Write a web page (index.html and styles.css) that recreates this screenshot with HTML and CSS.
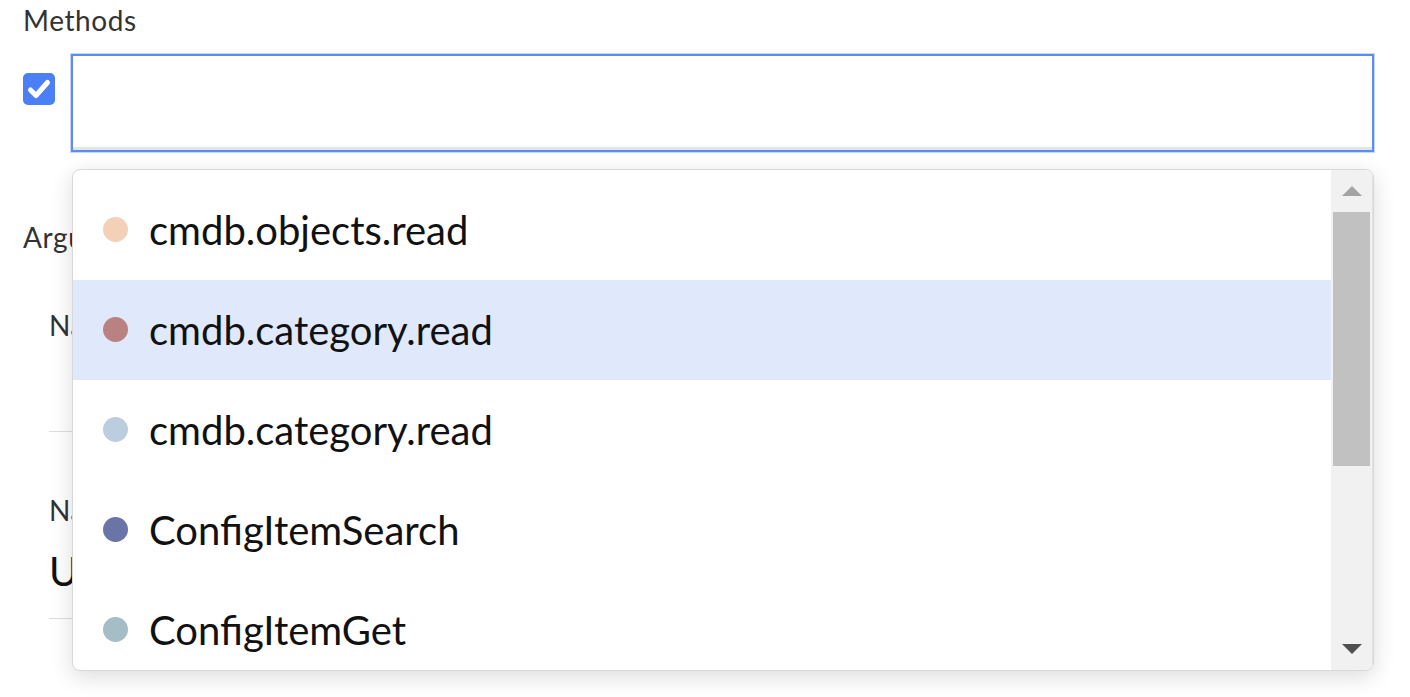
FILE: index.html
```html
<!DOCTYPE html>
<html lang="en">
<head>
<meta charset="utf-8">
<title>Methods</title>
<link rel="stylesheet" href="styles.css">
</head>
<body>
<div class="page">
  <div class="field">
    <div class="label">Methods</div>
    <div class="method-row">
      <span class="checkbox">
        <svg viewBox="0 0 32 32" width="32" height="32"><path d="M7.5 17 L13 22.5 L24.5 9.5" fill="none" stroke="#fff" stroke-width="5" stroke-linecap="round" stroke-linejoin="round"/></svg>
      </span>
      <div class="input"></div>
    </div>
  </div>

  <div class="section">
    <div class="label">Arguments</div>
    <div class="arg first">
      <div class="arg-label">Name</div>
      <div class="arg-value"></div>
    </div>
    <div class="arg">
      <div class="arg-label">Name</div>
      <div class="arg-value">UserName</div>
    </div>
  </div>

  <div class="dropdown">
    <ul class="options">
      <li class="option"><span class="dot" style="background:#f3d0b8"></span>cmdb.objects.read</li>
      <li class="option active"><span class="dot" style="background:#b98180"></span>cmdb.category.read</li>
      <li class="option"><span class="dot" style="background:#bccde0"></span>cmdb.category.read</li>
      <li class="option"><span class="dot" style="background:#6b74a6"></span>ConfigItemSearch</li>
      <li class="option"><span class="dot" style="background:#a4bdc6"></span>ConfigItemGet</li>
    </ul>
    <div class="scrollbar">
      <div class="arrow up"></div>
      <div class="track"><div class="thumb"></div></div>
      <div class="arrow down"></div>
    </div>
  </div>
</div>
</body>
</html>
```

FILE: styles.css
```css
html, body {
  margin: 0;
  padding: 0;
  background: #fff;
}
body {
  font-family: Lato, "Open Sans", sans-serif;
  color: #222;
  width: 1410px;
  height: 697px;
  overflow: hidden;
}
.page {
  position: relative;
  padding: 3px 36px 0 23px;
}
.label {
  font-size: 28px;
  line-height: 34px;
  letter-spacing: 0.6px;
  color: #333;
}
.method-row {
  display: flex;
  align-items: flex-start;
  gap: 16px;
  margin-top: 17px;
}
.checkbox {
  width: 32px;
  height: 32px;
  margin-top: 19px;
  border-radius: 5px;
  background: #4b7ff6;
  display: flex;
  flex-shrink: 0;
}
.input {
  flex: 1;
  height: 94px;
  border: 2px solid #5a8cf2;
  box-shadow: inset 0 -3px 0 #e4e4e4, 0 0 0 1px rgba(90,140,242,0.35);
  background: #fff;
}
.section {
  margin-top: 68px;
}
.arg {
  margin-left: 26px;
  border-bottom: 1px solid #ddd;
  height: 186px;
  display: flex;
  flex-direction: column;
}
.arg.first {
  height: 177px;
}
.arg-label {
  font-size: 28px;
  line-height: 34px;
  letter-spacing: 0.6px;
  color: #333;
  margin-top: 54px;
}
.arg:not(.first) .arg-label {
  margin-top: 61px;
}
.arg-value {
  font-size: 40px;
  line-height: 48px;
  color: #111;
  margin-top: 20px;
}
.dropdown {
  position: absolute;
  left: 72px;
  top: 169px;
  width: 1300px;
  height: 500px;
  border: 1px solid #d8d8d8;
  border-radius: 8px;
  background: #fff;
  box-shadow: 0 6px 22px rgba(0,0,0,0.14);
  display: flex;
  overflow: hidden;
}
.options {
  list-style: none;
  margin: 0;
  padding: 10px 0 0;
  flex: 1;
}
.option {
  height: 100px;
  display: flex;
  align-items: center;
  padding-left: 30px;
  font-size: 40px;
  color: #111;
}
.option.active {
  background: #e0e9fb;
}
.dot {
  width: 25px;
  height: 25px;
  border-radius: 50%;
  margin-right: 21px;
  flex-shrink: 0;
  margin-top: -2px;
}
.scrollbar {
  width: 41px;
  background: #f1f1f1;
  display: flex;
  flex-direction: column;
  border-right: 1px solid #e2e2e2;
}
.arrow {
  height: 42px;
  display: flex;
  align-items: center;
  justify-content: center;
}
.arrow.up::before {
  content: "";
  border-left: 10px solid transparent;
  border-right: 10px solid transparent;
  border-bottom: 10px solid #a3a3a3;
}
.arrow.down::before {
  content: "";
  border-left: 10px solid transparent;
  border-right: 10px solid transparent;
  border-top: 10px solid #505050;
}
.track {
  flex: 1;
  padding: 0 2px;
}
.thumb {
  height: 254px;
  background: #c1c1c1;
}
```
